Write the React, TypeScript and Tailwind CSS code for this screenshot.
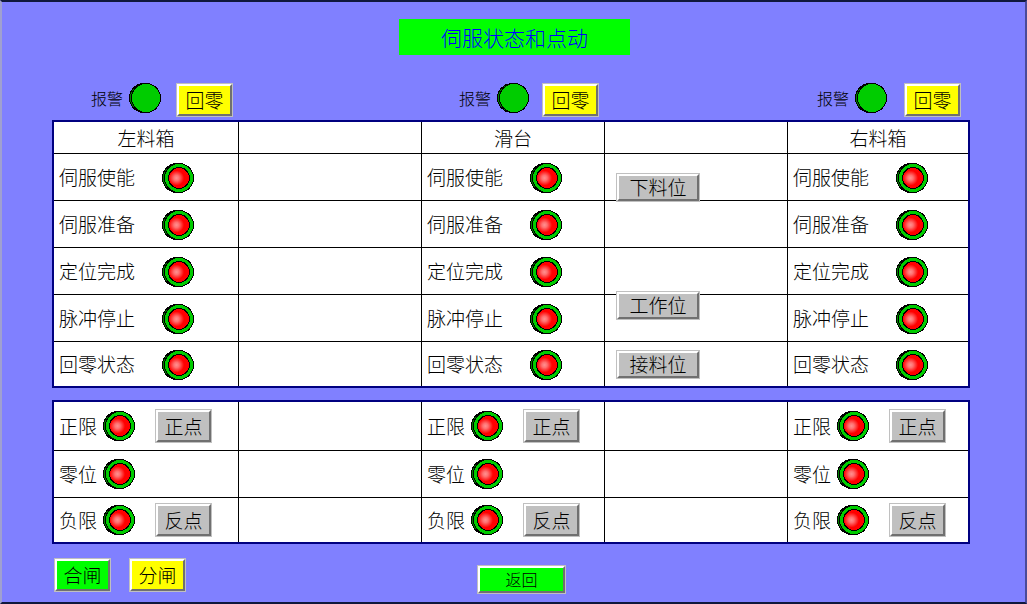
import type { ReactNode } from "react";
import clsx from "clsx";

type Axis = { id: string; name: string; alarmClass: string };

const axes: Axis[] = [
  { id: "left", name: "左料箱", alarmClass: "col-start-1 pl-[39px] gap-[15px]" },
  { id: "slide", name: "滑台", alarmClass: "col-start-3 pl-[37px] gap-[13px]" },
  { id: "right", name: "右料箱", alarmClass: "col-start-5 pl-[29px] gap-[17px]" },
];

const statusRows = [
  { label: "伺服使能", move: "下料位", movePad: "pt-[19px]" },
  { label: "伺服准备" },
  { label: "定位完成" },
  // this button sits on the line above its row
  { label: "脉冲停止", move: "工作位", movePad: "-mt-1" },
  { label: "回零状态", move: "接料位", movePad: "pt-2" },
];

const limitRows = [
  { label: "正限", jog: "正点", height: "h-[48px]" },
  { label: "零位", height: "h-[46px]" },
  { label: "负限", jog: "反点", height: "h-[44px]" },
];

const tones = {
  gray: "bg-[#c0c0c0]",
  yellow: "bg-[#ffff00]",
  green: "bg-[#00ff00]",
};

function PanelButton({
  children,
  tone = "gray",
  size = "h-[34px] w-[57px] text-[19px]",
}: {
  children: ReactNode;
  tone?: keyof typeof tones;
  size?: string;
}) {
  return (
    <button type="button" className={clsx("relative shrink-0 border border-[#c0c0c0]", size)}>
      <span
        className={clsx(
          "flex h-full w-full items-center justify-center border-2 border-t-white border-l-white border-r-[#707070] border-b-[#707070] pb-[2px] leading-none",
          tones[tone]
        )}
      >
        {children}
      </span>
    </button>
  );
}

function Lamp({ on = true, label }: { on?: boolean; label: string }) {
  return (
    <svg
      width="32"
      height="30"
      viewBox="0 0 32 30"
      className="shrink-0"
      shapeRendering="crispEdges"
      role="img"
      aria-label={label}
    >
      <defs>
        <radialGradient id="glow" cx="0.38" cy="0.5" r="0.36">
          <stop offset="0" stopColor="#ff9090" />
          <stop offset="0.35" stopColor="#ff7070" />
          <stop offset="1" stopColor="#ff0000" />
        </radialGradient>
      </defs>
      <ellipse cx="15" cy="15" rx="14.5" ry="14.5" fill="#008000" stroke="#000" />
      <ellipse cx="17" cy="15" rx="14.5" ry="14.5" fill="#00cc00" stroke="#000" />
      {on && <circle cx="17" cy="15" r="10.5" fill="url(#glow)" stroke="#000" />}
    </svg>
  );
}

function Columns() {
  return (
    <colgroup>
      <col className="w-[185px]" />
      <col className="w-[183px]" />
      <col className="w-[183px]" />
      <col className="w-[183px]" />
      <col />
    </colgroup>
  );
}

const tableClass =
  "w-full table-fixed border-separate border-spacing-0 border-2 border-[#000080] bg-white text-[19px] leading-6";
const cellClass = "border-r border-b border-black p-0 font-light last:border-r-0";

export default function App() {
  return (
    <main className="min-h-screen border-2 border-t-[#10183c] border-r-[#4a4a98] border-b-[#10183c] border-l-[#a0a0d0] bg-[#8080ff] pt-[17px] pr-[55px] pl-[50px] font-['Noto_Sans_CJK_SC',sans-serif] font-light text-black">
      <h1 className="ml-[347px] flex h-9 w-[231px] items-center justify-center bg-[#00ff00] text-[21px] leading-none text-[#0000ff]">
        伺服状态和点动
      </h1>

      <section className="mt-7 mb-[3px] grid grid-cols-[187px_183px_183px_183px_1fr]">
        {axes.map((axis) => (
          <div key={axis.id} className={clsx("flex items-start", axis.alarmClass)}>
            <span className="flex items-center gap-[6px] text-[16px] leading-6">
              报警
              <Lamp on={false} label={`${axis.name}报警`} />
            </span>
            <PanelButton tone="yellow">回零</PanelButton>
          </div>
        ))}
      </section>

      <table className={tableClass}>
        <Columns />
        <thead>
          <tr className="h-8">
            <th className={cellClass}>{axes[0].name}</th>
            <td className={cellClass} />
            <th className={cellClass}>{axes[1].name}</th>
            <td className={cellClass} />
            <th className={cellClass}>{axes[2].name}</th>
          </tr>
        </thead>
        <tbody>
          {statusRows.map((row, i) => {
            const last = i === statusRows.length - 1;
            const cell = clsx(cellClass, last && "border-b-0");
            const height = last ? "h-[44px]" : "h-[46px]";
            const status = (axis: Axis) => (
              <td className={cell}>
                <div className={clsx("flex items-center pl-[5px]", height)}>
                  <span className="w-[103px]">{row.label}</span>
                  <span className="pt-[2px]">
                    <Lamp label={`${axis.name}${row.label}`} />
                  </span>
                </div>
              </td>
            );
            return (
              <tr key={row.label}>
                {status(axes[0])}
                <td className={cell} />
                {status(axes[1])}
                <td className={clsx(cell, "align-top")}>
                  {row.move && (
                    <div className={clsx("flex items-start pl-[11px]", height, row.movePad)}>
                      <PanelButton size="h-[29px] w-[84px] text-[19px]">{row.move}</PanelButton>
                    </div>
                  )}
                </td>
                {status(axes[2])}
              </tr>
            );
          })}
        </tbody>
      </table>

      <table className={clsx(tableClass, "mt-3")}>
        <Columns />
        <tbody>
          {limitRows.map((row, i) => {
            const cell = clsx(cellClass, i === limitRows.length - 1 && "border-b-0");
            const limit = (axis: Axis) => (
              <td className={cell}>
                <div className={clsx("flex items-center pl-[5px]", row.height)}>
                  <span className="w-11">{row.label}</span>
                  <Lamp label={`${axis.name}${row.label}`} />
                  {row.jog && (
                    <div className="ml-5 flex">
                      <PanelButton>{row.jog}</PanelButton>
                    </div>
                  )}
                </div>
              </td>
            );
            return (
              <tr key={row.label}>
                {limit(axes[0])}
                <td className={cell} />
                {limit(axes[1])}
                <td className={cell} />
                {limit(axes[2])}
              </tr>
            );
          })}
        </tbody>
      </table>

      <footer className="flex items-start pt-[14px] pl-[2px]">
        <div className="flex w-[423px] gap-[18px]">
          <PanelButton tone="green">合闸</PanelButton>
          <PanelButton tone="yellow">分闸</PanelButton>
        </div>
        <div className="flex pt-[7px]">
          <PanelButton tone="green" size="h-[29px] w-[89px] text-[16px]">
            返回
          </PanelButton>
        </div>
      </footer>
    </main>
  );
}
